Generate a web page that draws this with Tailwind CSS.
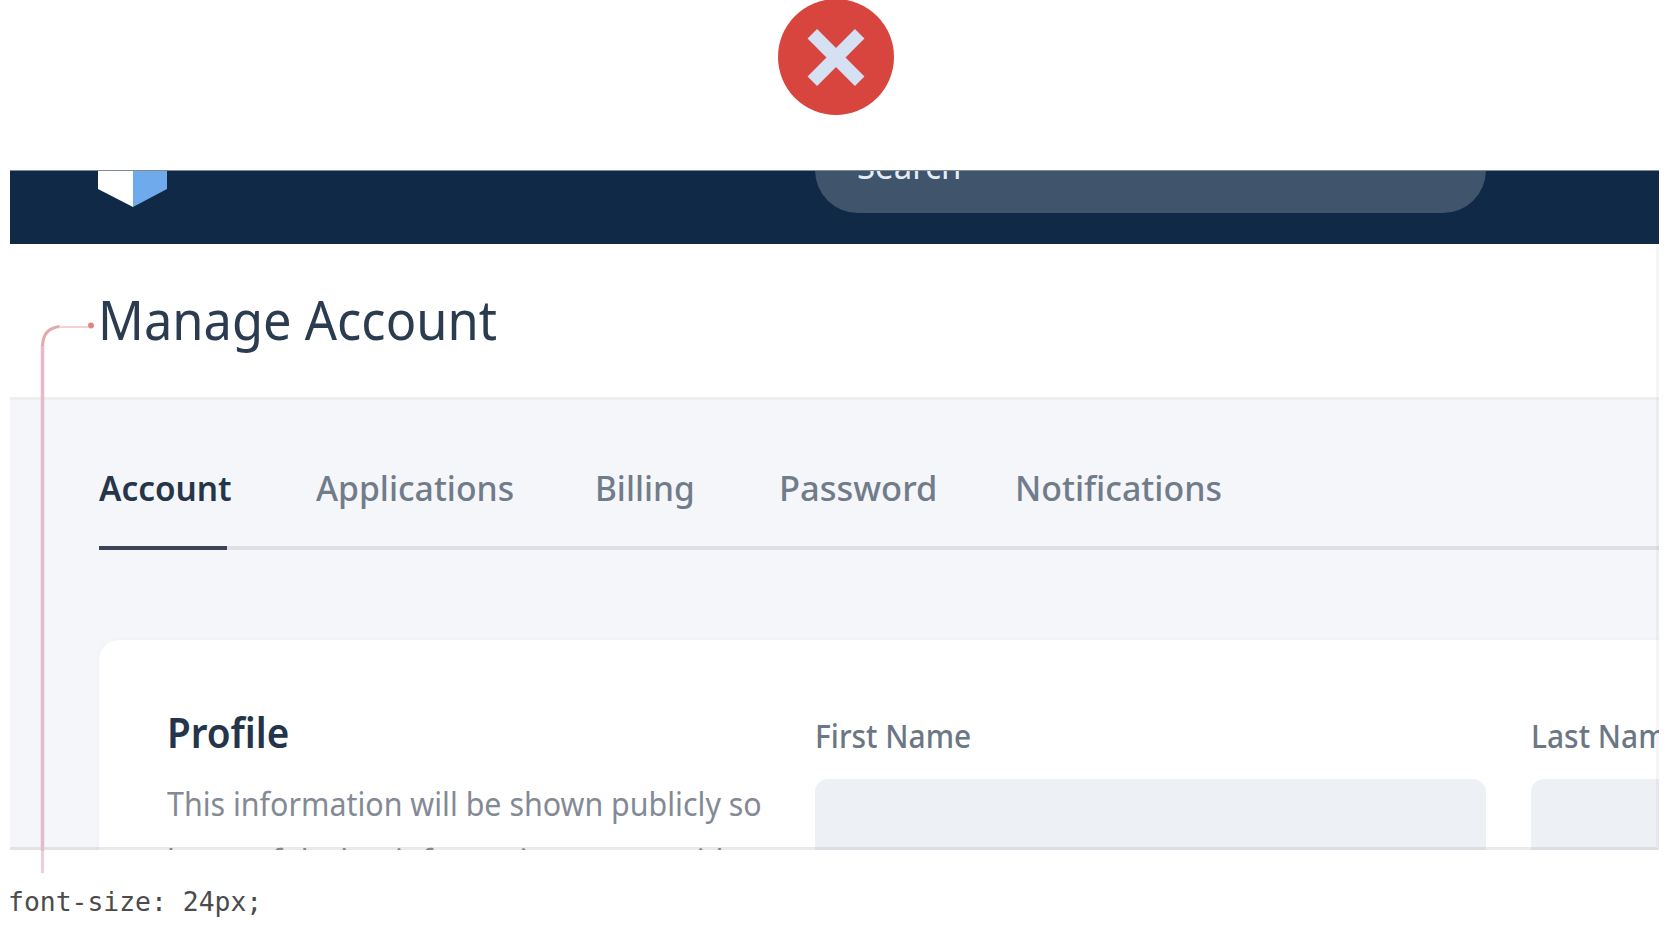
<!DOCTYPE html>
<html lang="en">
<head>
<meta charset="utf-8">
<title>Manage Account</title>
<script src="https://cdn.jsdelivr.net/npm/@tailwindcss/browser@4"></script>
</head>
<body class="relative h-[928px] overflow-hidden bg-white font-['Noto_Sans',sans-serif]">
  <div class="flex h-[170px] justify-center pr-[2px]">
    <svg class="h-[116px] w-[116px]" viewBox="0 0 116 116">
      <circle cx="58" cy="57" r="58" fill="#d8443e"/>
      <path d="M34.3 33.8 81.7 81.2M81.7 33.8 34.3 81.2" stroke="#d5e1f3" stroke-width="13.5" fill="none"/>
    </svg>
  </div>

  <main class="relative ml-[10px] h-[680px] w-[1649px] overflow-hidden">
    <header class="flex h-[74px] justify-between overflow-hidden border-t border-[#7c8c9c] bg-[#0f2947] pl-[88px] pr-[173px]">
      <svg class="h-[36px] w-[70px]" viewBox="0 0 70 36">
        <path d="M0 0H35V36L0 18Z" fill="#fff"/>
        <path d="M35 0H69V18L35 36Z" fill="#6fabec"/>
      </svg>
      <div class="-mt-[44px] h-[86px] w-[671px] rounded-full bg-[#40546c] pl-[42px] pt-[15px] text-[34px] leading-[48px] text-[#e4edf5]"><span class="inline-block origin-left scale-x-[.97]">Search</span></div>
    </header>

    <div class="h-[153px] bg-white pl-[88px] text-[54px] leading-[151px] text-[#2b3b50]">
      <h1 class="inline-block origin-left scale-x-[.937] whitespace-nowrap">Manage Account</h1>
    </div>

    <section class="h-[453px] border-t-3 border-[#efeff0] bg-[#f5f6fa] pl-[89px]">
      <nav class="flex h-[150px] border-b-4 border-[#dfe0e5] pt-[64px] text-[35px] font-medium leading-[48px] text-[#717c8b]">
        <a class="relative h-[86px] w-[217px] text-[#26364a]"><span class="inline-block origin-left scale-x-[.953] font-semibold">Account</span><i class="absolute left-0 top-[82px] h-1 w-[128px] bg-[#3c4359]"></i></a>
        <a class="w-[279px]"><span class="inline-block origin-left scale-x-[.963]">Applications</span></a>
        <a class="w-[184px]"><span class="inline-block origin-left scale-x-[.955]">Billing</span></a>
        <a class="w-[236px]"><span class="inline-block origin-left scale-x-[.985]">Password</span></a>
        <a><span class="inline-block origin-left scale-x-[.968]">Notifications</span></a>
      </nav>

      <div class="mt-[90px] flex h-[220px] rounded-tl-[20px] bg-white pl-[68px] pt-[68px] shadow-[0_0_4px_rgba(60,70,100,0.05)]">
        <div class="w-[648px] shrink-0">
          <h2 class="text-[42px] font-semibold leading-[48px] text-[#24344b]"><span class="inline-block origin-left scale-x-[.92]">Profile</span></h2>
          <p class="mt-[19px] whitespace-nowrap text-[33px] leading-[57px] text-[#838a95]"><span class="inline-block origin-left scale-x-[.921]">This information will be shown publicly so<br>be careful what information you provide.</span></p>
        </div>
        <label class="mr-[45px] mt-[4px] w-[671px] shrink-0 text-[32px] font-medium leading-[48px] text-[#6c7786]"><span class="block origin-left scale-x-[.935]">First Name</span><span class="mt-[19px] block h-24 rounded-[13px] bg-[#edf0f5]"></span></label>
        <label class="mt-[4px] w-[671px] shrink-0 text-[32px] font-medium leading-[48px] text-[#6c7786]"><span class="block origin-left scale-x-[.935]">Last Name</span><span class="mt-[19px] block h-24 rounded-[13px] bg-[#edf0f5]"></span></label>
      </div>
    </section>
    <div class="pointer-events-none absolute bottom-0 right-0 top-[76px] w-full border-b-3 border-r-3 border-b-[#7a7a80]/15 border-r-[#7a7a80]/7"></div>
  </main>

  <p class="pl-[8px] pt-[34px] font-['DejaVu_Sans_Mono',monospace] text-[26.4px] leading-[36px] text-[#4b4b4b]">font-size: 24px;</p>

  <!-- Callout from the heading to its caption -->
  <svg class="absolute left-0 top-[300px] h-[580px] w-[110px]" viewBox="0 0 110 580" fill="none">
    <path d="M42.5 573V551" stroke="#f3ccd4" stroke-width="3"/>
    <path d="M42.5 551V45" stroke="#e4bcc9" stroke-width="3.5"/>
    <path d="M42.5 46Q43 28 60 26.5" stroke="#e3a9ab" stroke-width="3"/>
    <path d="M59 27H88" stroke="#f3d2d2" stroke-width="2"/>
    <circle cx="91" cy="25.5" r="3" fill="#e28486"/>
  </svg>
</body>
</html>
